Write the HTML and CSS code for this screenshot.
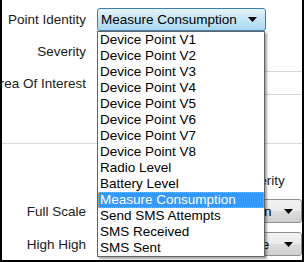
FILE: index.html
```html
<!DOCTYPE html>
<html lang="en">
<head>
  <meta charset="UTF-8" />
  <title>Point Settings</title>
  <link rel="stylesheet" href="styles.css">
</head>
<body>
  <div class="panel">
    <div class="row first">
      <div class="label"><span>Point Identity</span></div>
      <div class="select-main">
        <span>Measure Consumption</span>
        <svg class="arrow" width="9" height="5" viewBox="0 0 9 5"><polygon points="0,0 9,0 4.5,5" fill="#000"/></svg>
      </div>
    </div>

    <div class="row second">
      <div class="label"><span>Severity</span></div>
    </div>

    <div class="row third">
      <div class="label"><span>Area Of Interest</span></div>
      <div class="text-box"></div>
    </div>

    <div class="separator"></div>

    <div class="row header">
      <div class="label"></div>
      <div class="spacer"></div>
      <div class="col-head">Severity</div>
    </div>

    <div class="row scale">
      <div class="label"><span>Full Scale</span></div>
      <div class="spacer"></div>
      <div class="select-gray">
        <span>Down</span>
        <svg class="arrow" width="9" height="5" viewBox="0 0 9 5"><polygon points="0,0 9,0 4.5,5" fill="#000"/></svg>
      </div>
    </div>

    <div class="row scale">
      <div class="label"><span>High High</span></div>
      <div class="spacer"></div>
      <div class="select-gray">
        <span>None</span>
        <svg class="arrow" width="9" height="5" viewBox="0 0 9 5"><polygon points="0,0 9,0 4.5,5" fill="#000"/></svg>
      </div>
    </div>

    <!-- open dropdown list of the Point Identity select -->
    <ul class="dropdown">
      <li>Device Point V1</li>
      <li>Device Point V2</li>
      <li>Device Point V3</li>
      <li>Device Point V4</li>
      <li>Device Point V5</li>
      <li>Device Point V6</li>
      <li>Device Point V7</li>
      <li>Device Point V8</li>
      <li>Radio Level</li>
      <li>Battery Level</li>
      <li class="selected">Measure Consumption</li>
      <li>Send SMS Attempts</li>
      <li>SMS Received</li>
      <li>SMS Sent</li>
    </ul>
  </div>
</body>
</html>
```

FILE: styles.css
```css
body {
  margin: 0;
  background: #fff;
}

.panel {
  position: relative;
  width: 304px;
  height: 262px;
  box-sizing: border-box;
  border: 2px solid #000;
  border-top: none;
  overflow: hidden;
  background: #fff;
  font-family: "Liberation Sans", Arial, sans-serif;
  font-size: 13.5px;
  color: #1a1a1a;
}

.row {
  display: flex;
  align-items: center;
  height: 23px;
}

.row.first {
  margin-top: 8px;
}

.row.second {
  margin-top: 9px;
}

.row.third {
  margin-top: 8px;
  height: 24px;
}

.label {
  width: 84px;
  flex: none;
  display: flex;
  justify-content: flex-end;
  white-space: nowrap;
  margin-right: 11px;
}

.select-main {
  width: 169px;
  height: 23px;
  box-sizing: border-box;
  border: 1px solid #3c7fb1;
  border-radius: 3px;
  background: linear-gradient(#e5f4fc, #c4e5f6 50%, #a9d8f1);
  display: flex;
  align-items: center;
  justify-content: space-between;
  padding: 0 8px 0 3px;
  color: #000;
}

.arrow {
  display: block;
}

.text-box {
  width: 240px;
  height: 24px;
  box-sizing: border-box;
  flex: none;
  border: 1px solid #cdd7e0;
}

.separator {
  margin-top: 48px;
  height: 1px;
  background: #d3dce3;
}

.row.header {
  margin-top: 25px;
}

.spacer {
  flex: 1;
}

.col-head {
  width: 70px;
  text-align: left;
  padding-left: 4px;
  box-sizing: border-box;
}

.row.scale {
  margin-top: 7px;
  height: 24px;
}

.row.scale + .row.scale {
  margin-top: 9px;
}

.select-gray {
  width: 70px;
  height: 24px;
  box-sizing: border-box;
  flex: none;
  border: 1px solid #8e8f8f;
  border-radius: 3px;
  background: linear-gradient(#f2f2f2, #ebebeb 50%, #dddddd 50%, #cfcfcf);
  display: flex;
  align-items: center;
  justify-content: space-between;
  padding: 0 8px 0 4px;
  color: #000;
}

.dropdown {
  position: absolute;
  left: 95px;
  top: 31px;
  width: 168px;
  margin: 0;
  padding: 0;
  list-style: none;
  box-sizing: border-box;
  border: 1px solid #646464;
  background: #fff;
  box-shadow: 2px 2px 2px rgba(0, 0, 0, 0.35);
  color: #000;
}

.dropdown li {
  height: 16px;
  line-height: 16px;
  padding-left: 2px;
  white-space: nowrap;
}

.dropdown li.selected {
  background: #3399ff;
  color: #fff;
  outline: 1px dotted #f2a641;
  outline-offset: -1px;
}
```
